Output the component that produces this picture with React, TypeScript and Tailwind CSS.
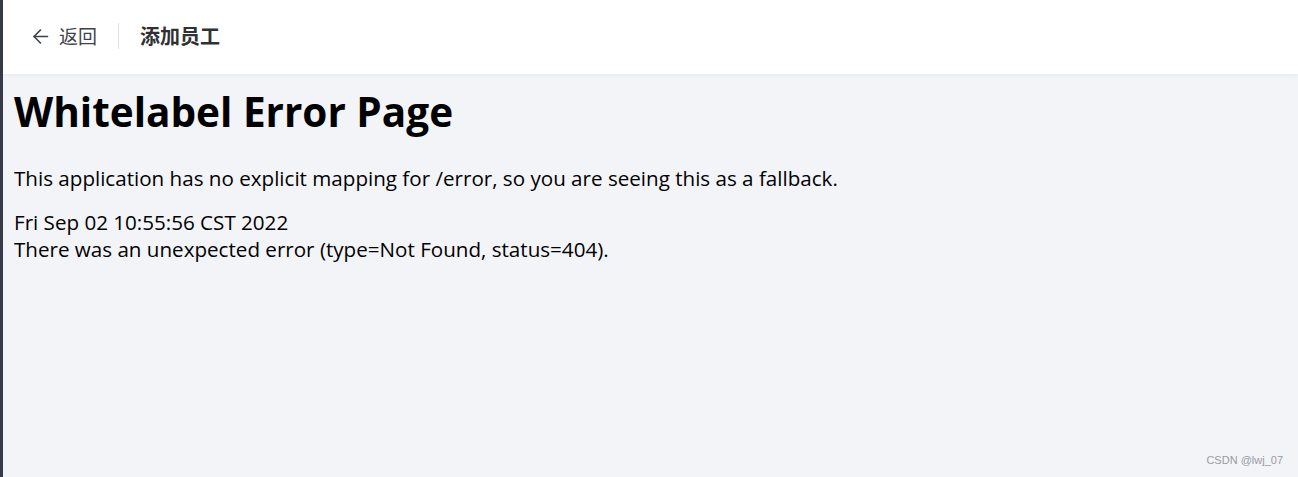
import React from 'react'

function BackArrow() {
  return (
    <svg width="17" height="17" viewBox="0 0 17 17" fill="none" stroke="currentColor" strokeWidth="1.6" strokeLinecap="round" strokeLinejoin="round">
      <path d="M15.5 8.5H2" />
      <path d="M8.5 2L2 8.5L8.5 15" />
    </svg>
  )
}

export default function App() {
  return (
    <div className="flex h-[477px] w-[1298px] overflow-hidden bg-[#f3f4f8]" style={{ fontFamily: '"Open Sans", "Noto Sans CJK SC", sans-serif' }}>
      <div className="w-[3px] shrink-0 bg-[#363b47]" />
      <div className="relative flex flex-1 flex-col">
        <header className="flex h-[74px] shrink-0 items-center bg-white pb-[2px] pl-[29px] shadow-[0_1px_4px_rgba(0,21,41,0.06)]">
          <button className="flex items-center gap-[10px] text-[19px] text-[#3f424a]">
            <BackArrow />
            <span style={{ fontFamily: '"Noto Sans CJK SC", sans-serif' }}>返回</span>
          </button>
          <div className="mx-[21px] h-[26px] w-px bg-[#dcdfe6]" />
          <h2 className="text-[20px] font-bold text-[#303133]" style={{ fontFamily: '"Noto Sans CJK SC", sans-serif' }}>
            添加员工
          </h2>
        </header>
        <main className="flex-1 pl-[11px] text-[20.6px] text-black">
          <h1 className="mt-[12px] text-[40.5px] font-bold leading-[52px]">Whitelabel Error Page</h1>
          <p className="mt-[27px] leading-[27px]">
            This application has no explicit mapping for /error, so you are seeing this as a fallback.
          </p>
          <div className="mt-[17px] leading-[27px]">Fri Sep 02 10:55:56 CST 2022</div>
          <div className="leading-[27px]">There was an unexpected error (type=Not Found, status=404).</div>
        </main>
        <div className="absolute bottom-[9px] right-[15px] text-[11px] text-[#999aa0]" style={{ fontFamily: 'Arial, "Liberation Sans", sans-serif' }}>
          CSDN @lwj_07
        </div>
      </div>
    </div>
  )
}
